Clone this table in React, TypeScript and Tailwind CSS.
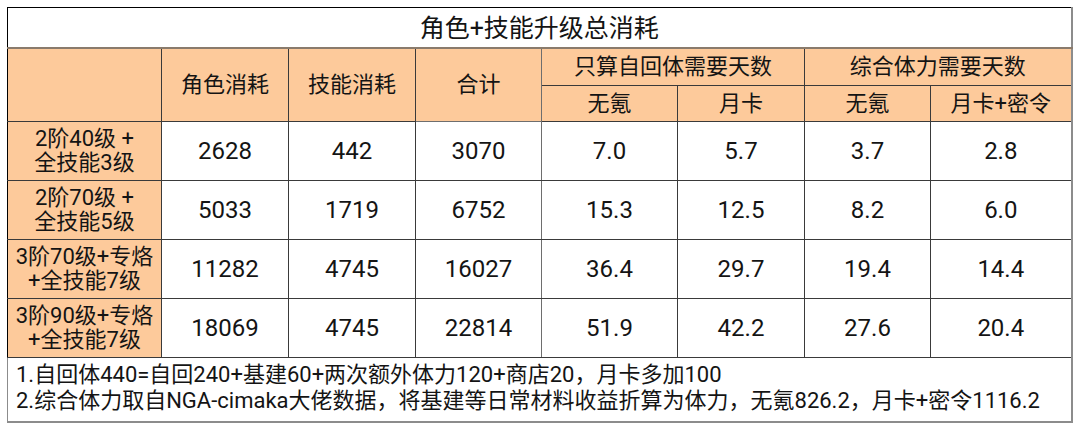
import React from "react";

const rows = [
  { label: ["2阶40级 +", "全技能3级"], vals: ["2628", "442", "3070", "7.0", "5.7", "3.7", "2.8"] },
  { label: ["2阶70级 +", "全技能5级"], vals: ["5033", "1719", "6752", "15.3", "12.5", "8.2", "6.0"] },
  { label: ["3阶70级+专烙", "+全技能7级"], vals: ["11282", "4745", "16027", "36.4", "29.7", "19.4", "14.4"] },
  { label: ["3阶90级+专烙", "+全技能7级"], vals: ["18069", "4745", "22814", "51.9", "42.2", "27.6", "20.4"] },
];

const font = { fontFamily: 'Roboto, "Noto Sans CJK SC", sans-serif' };

export default function App() {
  return (
    <div className="w-[1080px] h-[428px] bg-white pt-[7px] pl-[7px] text-[#141414]" style={font}>
      <table className="table-fixed border-collapse w-[1065px] border-t border-l border-t-black border-l-black border-r-2 border-r-[#8c8c8c]">
        <colgroup>
          <col className="w-[154px]" />
          <col className="w-[127px]" />
          <col className="w-[127px]" />
          <col className="w-[126px]" />
          <col className="w-[136px]" />
          <col className="w-[127px]" />
          <col className="w-[126px]" />
          <col className="w-[141px]" />
        </colgroup>
        <tbody>
          {/* title */}
          <tr className="h-[40px]">
            <td colSpan={8} className="text-center text-[25px] leading-none border-b-2 border-b-[#8a7b6c] pt-[2px]">
              角色+技能升级总消耗
            </td>
          </tr>
          {/* header */}
          <tr className="h-[38px] bg-[#fdca9b] text-[22px]">
            <td rowSpan={2} className="border-r border-[#3a3a3a] border-b" />
            <td rowSpan={2} className="text-center border-r border-b border-[#3a3a3a]">角色消耗</td>
            <td rowSpan={2} className="text-center border-r border-b border-[#3a3a3a]">技能消耗</td>
            <td rowSpan={2} className="text-center border-r border-b border-[#6e6e6e]">合计</td>
            <td colSpan={2} className="text-center border-r border-b border-[#3a3a3a] leading-none">只算自回体需要天数</td>
            <td colSpan={2} className="text-center border-b border-[#3a3a3a] leading-none">综合体力需要天数</td>
          </tr>
          <tr className="h-[36px] bg-[#fdca9b] text-[22px] leading-none">
            <td className="text-center border-r border-b border-[#3a3a3a]">无氪</td>
            <td className="text-center border-r border-b border-[#3a3a3a]">月卡</td>
            <td className="text-center border-r border-b border-[#3a3a3a]">无氪</td>
            <td className="text-center border-b border-[#3a3a3a]">月卡+密令</td>
          </tr>
          {rows.map((r, i) => (
            <tr key={i} className="h-[59px]">
              <td className="bg-[#fdca9b] text-center text-[22px] leading-[24px] border-r border-b border-[#3a3a3a]">
                {r.label[0]}
                <br />
                {r.label[1]}
              </td>
              {r.vals.map((v, j) => (
                <td
                  key={j}
                  className={`text-center text-[24px] border-b border-[#3a3a3a] ${j < 6 ? "border-r" : ""} ${j === 2 ? "border-r-[#6e6e6e]" : ""}`}
                >
                  {v}
                </td>
              ))}
            </tr>
          ))}
          <tr className="h-[64px]">
            <td colSpan={8} className="text-[22px] leading-[26px] px-[8px] pb-[2px] border-b-2 border-b-[#8c8c8c] border-l border-l-[#8c8c8c]">
              <div>1.自回体440=自回240+基建60+两次额外体力120+商店20，月卡多加100</div>
              <div>2.综合体力取自NGA-cimaka大佬数据，将基建等日常材料收益折算为体力，无氪826.2，月卡+密令1116.2</div>
            </td>
          </tr>
        </tbody>
      </table>
    </div>
  );
}
